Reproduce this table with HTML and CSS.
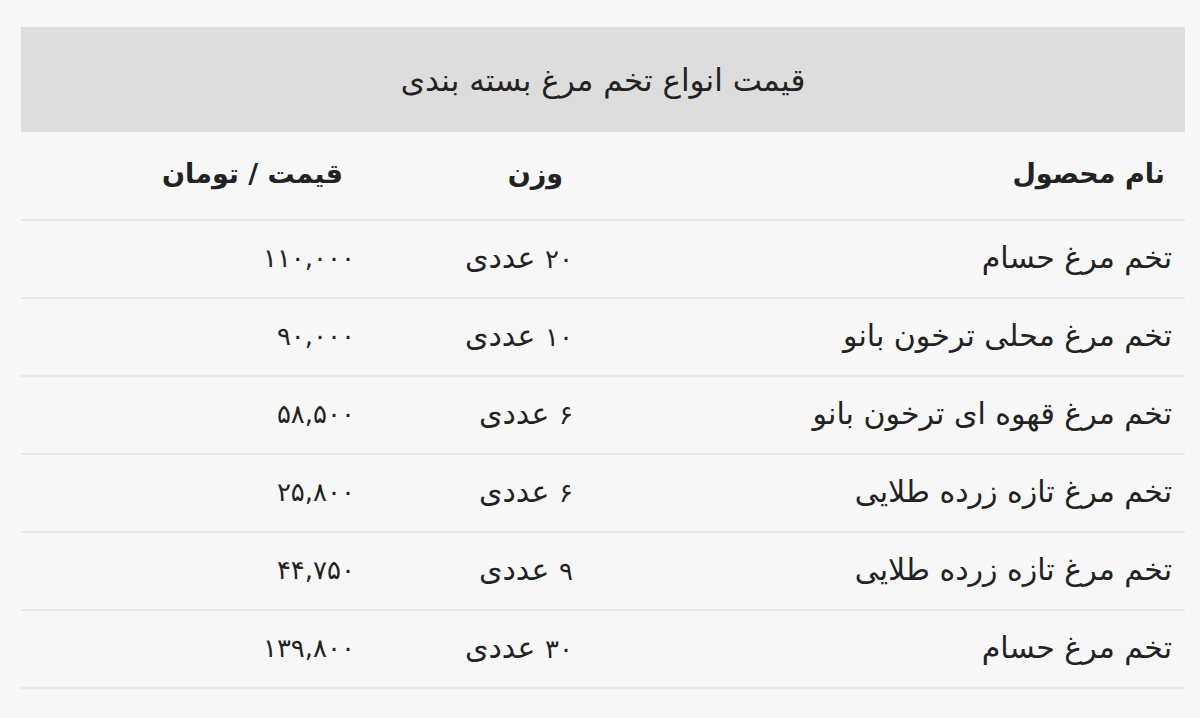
FILE: index.html
```html
<!DOCTYPE html>
<html lang="fa" dir="rtl">
<head>
<meta charset="utf-8">
<title>قیمت انواع تخم مرغ بسته بندی</title>
<link rel="stylesheet" href="styles.css">
</head>
<body>
<div class="page">
  <table class="prices">
    <colgroup>
      <col class="c-name">
      <col class="c-weight">
      <col class="c-price">
    </colgroup>
    <thead>
      <tr class="title-row"><th colspan="3">قیمت انواع تخم مرغ بسته بندی</th></tr>
      <tr class="head-row">
        <th class="name">نام محصول</th>
        <th class="weight">وزن</th>
        <th class="price">قیمت / تومان</th>
      </tr>
    </thead>
    <tbody>
      <tr><td class="name">تخم مرغ حسام</td><td class="weight"><span class="num">۲۰</span> عددی</td><td class="price">۱۱۰,۰۰۰</td></tr>
      <tr><td class="name">تخم مرغ محلی ترخون بانو</td><td class="weight"><span class="num">۱۰</span> عددی</td><td class="price">۹۰,۰۰۰</td></tr>
      <tr><td class="name">تخم مرغ قهوه ای ترخون بانو</td><td class="weight"><span class="num">۶</span> عددی</td><td class="price">۵۸,۵۰۰</td></tr>
      <tr><td class="name">تخم مرغ تازه زرده طلایی</td><td class="weight"><span class="num">۶</span> عددی</td><td class="price">۲۵,۸۰۰</td></tr>
      <tr><td class="name">تخم مرغ تازه زرده طلایی</td><td class="weight"><span class="num">۹</span> عددی</td><td class="price">۴۴,۷۵۰</td></tr>
      <tr><td class="name">تخم مرغ حسام</td><td class="weight"><span class="num">۳۰</span> عددی</td><td class="price">۱۳۹,۸۰۰</td></tr>
    </tbody>
  </table>
</div>
</body>
</html>
```

FILE: styles.css
```css
html, body {
  margin: 0;
  padding: 0;
  background: #f7f7f7;
}
body {
  font-family: "DejaVu Sans", sans-serif;
  color: #222;
  width: 1200px;
  height: 718px;
  overflow: hidden;
}
.page {
  padding: 27px 15px 0 21px;
}
.prices {
  width: 1164px;
  border-collapse: collapse;
  table-layout: fixed;
}
.c-name { width: 600px; }
.c-weight { width: 215px; }
.c-price { width: 349px; }

.title-row th {
  background: #dddddd;
  height: 105px;
  padding: 0;
  font-weight: normal;
  font-size: 31px;
  text-align: center;
  vertical-align: middle;
}
.head-row th {
  height: 83px;
  padding: 0 0 4px 0;
  font-size: 27px;
  font-weight: bold;
  text-align: right;
  vertical-align: middle;
  border-bottom: 2px solid #e6e6e6;
}
tbody td {
  height: 73px;
  font-size: 30px;
  text-align: right;
  vertical-align: middle;
  border-bottom: 2px solid #e8e8e8;
  padding: 0 0 3px 0;
}
.name { padding-right: 13px; }
tbody .weight { padding-right: 12px; }
.num { font-size: 26px; }
td.price { padding-right: 15px; font-size: 26px; }
.head-row .name { padding-right: 20px; }
.head-row .weight { padding-right: 22px; }
.head-row .price { padding-right: 27px; }
```
